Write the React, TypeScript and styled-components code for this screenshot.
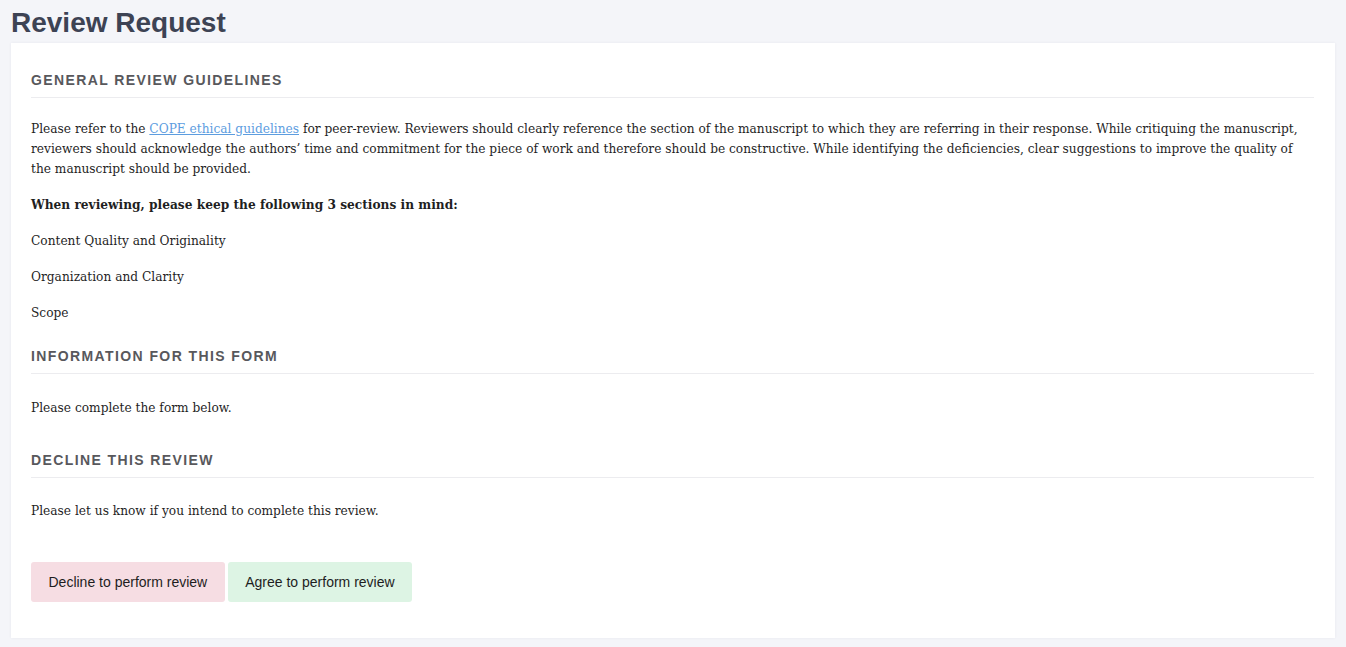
import React from "react";
import styled, { createGlobalStyle } from "styled-components";

const Global = createGlobalStyle`
  html, body { margin: 0; padding: 0; background: #f4f5f9; }
  * { box-sizing: border-box; }
`;

const Page = styled.div`
  padding: 6px 11px 9px 11px;
  font-family: "DejaVu Serif", serif;
`;

const Title = styled.h1`
  margin: 0 0 3px 0;
  font-family: "Liberation Sans", Arial, sans-serif;
  font-size: 28px;
  line-height: 34px;
  font-weight: 700;
  color: #3d4354;
`;

const Card = styled.div`
  background: #ffffff;
  padding: 27px 21px 36px 20px;
  box-shadow: 0 0 3px rgba(30, 40, 80, 0.06);
`;

const Section = styled.section<{ $top?: number }>`
  margin-top: ${(p) => p.$top ?? 0}px;
`;

const Heading = styled.h2<{ $after?: number }>`
  margin: 0 0 ${(p) => p.$after ?? 21}px 0;
  padding-bottom: 7px;
  border-bottom: 1px solid #ececef;
  font-family: "Liberation Sans", Arial, sans-serif;
  font-size: 14px;
  line-height: 20px;
  font-weight: 700;
  letter-spacing: 1.4px;
  text-transform: uppercase;
  color: #58585c;
`;

const Para = styled.p<{ $bold?: boolean }>`
  margin: 0 0 16px 0;
  font-size: 12.2px;
  line-height: 20px;
  color: #1f1f1f;
  font-weight: ${(p) => (p.$bold ? 700 : 400)};
`;

const Link = styled.a`
  color: #5d9ddf;
  text-decoration: underline;
`;

const Actions = styled.div`
  display: flex;
  gap: 3px;
  margin-top: 41px;
`;

const Button = styled.button<{ $tone: "decline" | "agree" }>`
  height: 40px;
  padding: 0 17.5px;
  border: none;
  border-radius: 3px;
  font-family: "Liberation Sans", Arial, sans-serif;
  font-size: 14px;
  color: #1e1e1e;
  cursor: pointer;
  background: ${(p) => (p.$tone === "decline" ? "#f6dde3" : "#ddf4e4")};
`;

export default function App() {
  return (
    <Page>
      <Global />
      <Title>Review Request</Title>
      <Card>
        <Section>
          <Heading>General Review Guidelines</Heading>
          <Para>
            Please refer to the <Link href="#">COPE ethical guidelines</Link> for peer-review.
            Reviewers should clearly reference the section of the manuscript to which they are
            referring in their response. While critiquing the manuscript, reviewers should
            acknowledge the authors’ time and commitment for the piece of work and therefore
            should be constructive. While identifying the deficiencies, clear suggestions to
            improve the quality of the manuscript should be provided.
          </Para>
          <Para $bold>When reviewing, please keep the following 3 sections in mind:</Para>
          <Para>Content Quality and Originality</Para>
          <Para>Organization and Clarity</Para>
          <Para>Scope</Para>
        </Section>
        <Section $top={23}>
          <Heading $after={24}>Information for this form</Heading>
          <Para>Please complete the form below.</Para>
        </Section>
        <Section $top={32}>
          <Heading $after={23}>Decline this review</Heading>
          <Para>Please let us know if you intend to complete this review.</Para>
        </Section>
        <Actions>
          <Button $tone="decline">Decline to perform review</Button>
          <Button $tone="agree">Agree to perform review</Button>
        </Actions>
      </Card>
    </Page>
  );
}
